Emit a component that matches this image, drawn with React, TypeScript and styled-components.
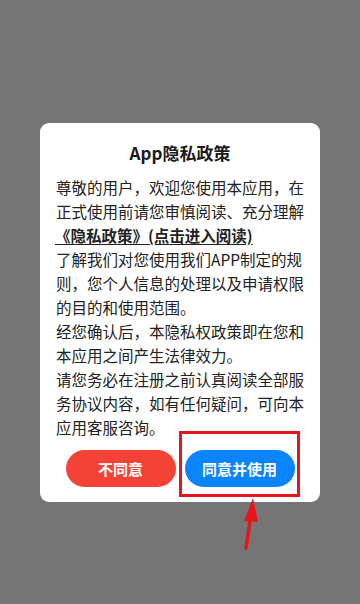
import styled, { createGlobalStyle } from 'styled-components';

const GlobalStyle = createGlobalStyle`
  html, body {
    margin: 0;
    padding: 0;
    background: #757575;
  }
  body {
    font-family: "Noto Sans CJK SC", "Noto Sans", sans-serif;
  }
`;

const Screen = styled.div`
  position: relative;
  width: 360px;
  height: 604px;
  background: #757575;
  display: flex;
  flex-direction: column;
  align-items: center;
  padding-top: 123px;
  box-sizing: border-box;
  overflow: hidden;
`;

const Dialog = styled.div`
  width: 280px;
  background: #ffffff;
  border-radius: 9px;
  padding: 18px 0 15px;
  box-sizing: border-box;
  display: flex;
  flex-direction: column;
`;

const Title = styled.div`
  text-align: center;
  font-size: 17px;
  line-height: 24px;
  font-weight: 700;
  color: #1a1a1a;
`;

const Body = styled.div`
  margin-top: 10px;
  padding: 0 15px 0 16px;
  font-size: 15.5px;
  line-height: 24px;
  color: #222222;
`;

const PolicyLink = styled.span`
  display: inline-block;
  margin-left: -1px;
  font-weight: 700;
  text-decoration: underline;
  text-underline-offset: 2px;
`;

const Actions = styled.div`
  margin-top: 11px;
  display: flex;
  justify-content: center;
  gap: 9px;
`;

const ButtonSlot = styled.div`
  position: relative;
`;

const ActionButton = styled.button<{ $primary?: boolean }>`
  width: 110px;
  height: 37px;
  border: none;
  border-radius: 19px;
  background: ${({ $primary }) => ($primary ? '#0a84ff' : '#f44336')};
  color: #ffffff;
  font-family: inherit;
  font-size: 15px;
  font-weight: 700;
  padding: 0;
`;

const Highlight = styled.div`
  position: absolute;
  top: -19px;
  left: -6px;
  right: -5px;
  bottom: -10px;
  border: 3px solid #e8141c;
  pointer-events: none;
`;

const Arrow = styled.svg`
  position: absolute;
  left: 234px;
  top: 494px;
`;

export default function App() {
  return (
    <>
      <GlobalStyle />
      <Screen>
        <Dialog>
          <Title>App隐私政策</Title>
          <Body>
            尊敬的用户，欢迎您使用本应用，在正式使用前请您审慎阅读、充分理解
            <br />
            <PolicyLink>《隐私政策》(点击进入阅读)</PolicyLink>
            <br />
            了解我们对您使用我们APP制定的规则，您个人信息的处理以及申请权限的目的和使用范围。
            <br />
            经您确认后，本隐私权政策即在您和本应用之间产生法律效力。
            <br />
            请您务必在注册之前认真阅读全部服务协议内容，如有任何疑问，可向本应用客服咨询。
          </Body>
          <Actions>
            <ButtonSlot>
              <ActionButton>不同意</ActionButton>
            </ButtonSlot>
            <ButtonSlot>
              <ActionButton $primary>同意并使用</ActionButton>
              <Highlight />
            </ButtonSlot>
          </Actions>
        </Dialog>
        <Arrow width="30" height="60" viewBox="0 0 30 60">
          <line x1="12" y1="54" x2="17" y2="20" stroke="#e8141c" strokeWidth="3.5" strokeLinecap="round" />
          <polygon points="19,4 10,27 24,28" fill="#e8141c" />
        </Arrow>
      </Screen>
    </>
  );
}
